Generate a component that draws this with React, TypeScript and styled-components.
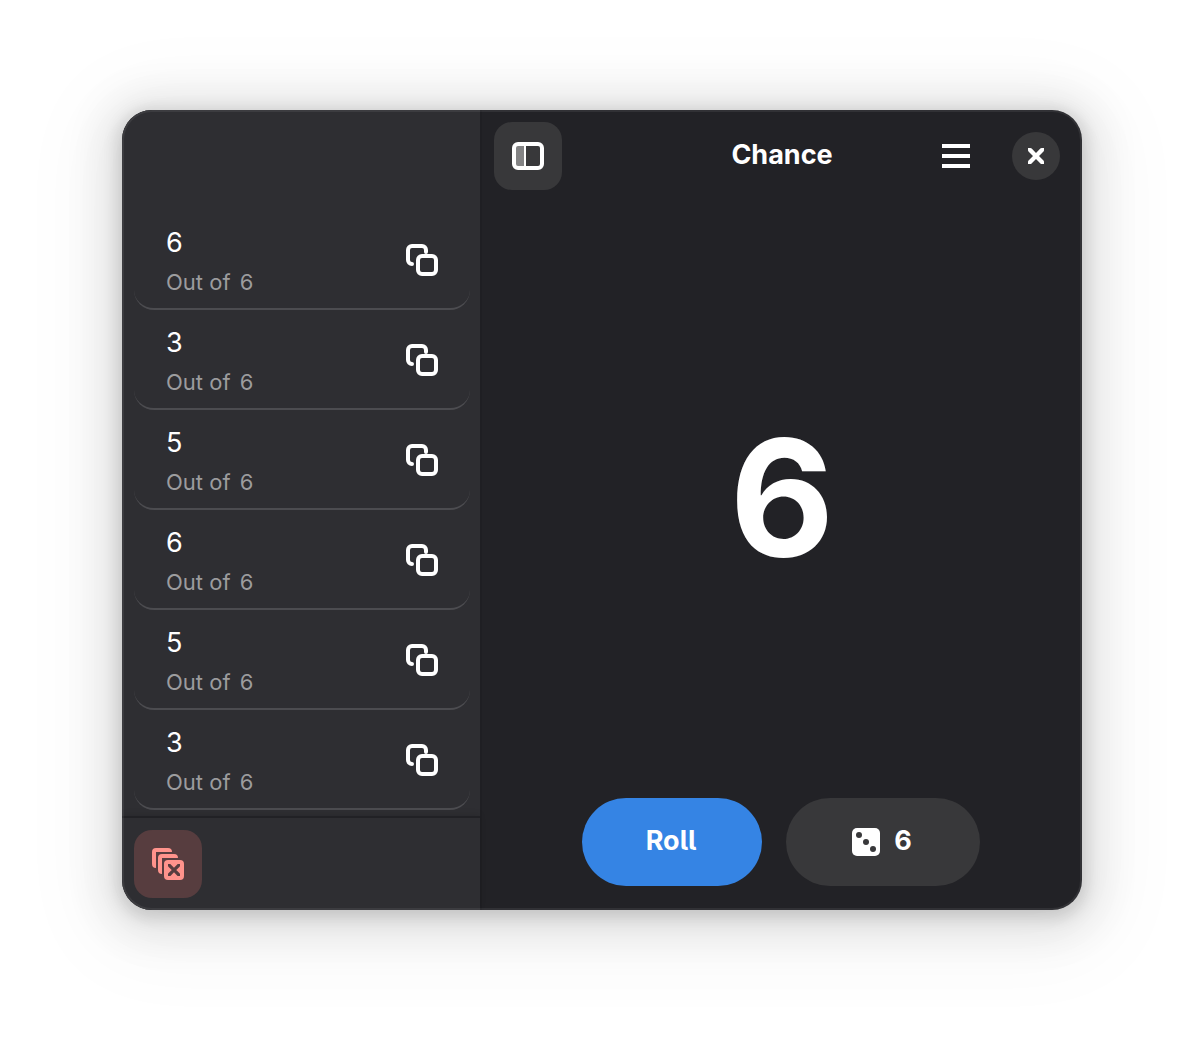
import React from "react";
import styled, { createGlobalStyle } from "styled-components";

const GlobalStyle = createGlobalStyle`
  *, *::before, *::after { box-sizing: border-box; }
  body {
    margin: 0;
    background: #ffffff;
    color: #ffffff;
    font-family: Inter, "Liberation Sans", sans-serif;
    font-size: 27px;
    line-height: 36px;
  }
  h1, p, ul { margin: 0; padding: 0; }
  button { border: 0; padding: 0; color: inherit; font: inherit; cursor: pointer; }
  svg { display: block; }
`;

const Desktop = styled.div`
  display: flex;
  min-height: 100vh;
  padding: 110px 122px 134px;
`;

const Window = styled.div`
  position: relative;
  display: flex;
  flex: 1;
  overflow: hidden;
  border-radius: 30px;
  background: #222226;
  box-shadow:
    0 4px 16px 4px rgba(0, 0, 0, 0.13),
    0 6px 40px 20px rgba(0, 0, 0, 0.09),
    0 12px 80px 40px rgba(0, 0, 0, 0.03);

  &::after {
    content: "";
    position: absolute;
    inset: 0;
    border: 2px solid rgba(255, 255, 255, 0.07);
    border-radius: inherit;
    pointer-events: none;
  }
`;

const Sidebar = styled.aside`
  display: flex;
  flex-direction: column;
  width: 360px;
  border-right: 2px solid #1f1f23;
  background: #2e2e32;
`;

const History = styled.ul`
  flex: 1;
  padding: 100px 10px 6px 12px;
  list-style: none;
`;

const Entry = styled.li`
  display: flex;
  align-items: center;
  justify-content: space-between;
  height: 100px;
  padding: 2px 32px 0;
  border-bottom: 2px solid #4c4c50;
  border-radius: 0 0 20px 20px;
`;

const EntryText = styled.div`
  padding-top: 2px;
`;

const Value = styled.p`
  line-height: 42px;
`;

const Caption = styled.p`
  color: #9c9c9e;
  font-size: 22px;
  line-height: 36px;
`;

const Sides = styled.span`
  margin-left: 3px;
`;

const SidebarFooter = styled.footer`
  padding: 12px;
  border-top: 2px solid #212125;
  box-shadow: 0 -2px 6px rgba(0, 0, 0, 0.1);
`;

const PlainButton = styled.button`
  background: transparent;
`;

const SquareButton = styled.button<{ $danger?: boolean }>`
  display: grid;
  place-items: center;
  width: 68px;
  height: 68px;
  border-radius: 18px;
  background: ${(p) => (p.$danger ? "#573d3f" : "#38383a")};
  color: ${(p) => (p.$danger ? "#ff938c" : "#ffffff")};
`;

const MenuButton = styled(SquareButton)`
  background: transparent;
`;

const CloseButton = styled.button`
  display: grid;
  place-items: center;
  width: 48px;
  height: 48px;
  border-radius: 50%;
  background: #38383a;
`;

const Content = styled.main`
  display: flex;
  flex: 1;
  flex-direction: column;
`;

const Header = styled.header`
  display: grid;
  grid-template-columns: 1fr auto 1fr;
  align-items: center;
  padding: 12px;
`;

const Title = styled.h1`
  padding-bottom: 2px;
  font-size: 27px;
  font-weight: 700;
`;

const HeaderEnd = styled.div`
  display: flex;
  align-items: center;
  justify-content: flex-end;
  gap: 22px;
  padding-right: 10px;
`;

const Result = styled.output`
  display: grid;
  flex: 1;
  place-items: center;
  padding-bottom: 4px;
  font-size: 161px;
  font-weight: 700;
  line-height: 200px;
`;

const Actions = styled.div`
  display: flex;
  justify-content: center;
  gap: 24px;
  padding: 0 26px 24px 24px;
`;

const PillButton = styled.button<{ $primary?: boolean }>`
  display: flex;
  align-items: center;
  justify-content: center;
  width: ${(p) => (p.$primary ? 180 : 194)}px;
  height: 88px;
  padding: 0 2px 0 0;
  border-radius: 44px;
  background: ${(p) => (p.$primary ? "#3584e4" : "#38383a")};
  font-weight: 700;
  font-feature-settings: "cv05";
`;

const PillLabel = styled.span`
  padding-bottom: 2px;
`;

const DieSlot = styled.span`
  margin-right: 14px;
`;

const CopyIcon = () => (
  <svg width="32" height="32" viewBox="0 0 32 32" fill="none" stroke="currentColor" strokeWidth="4" strokeLinecap="round" aria-hidden="true">
    <path d="M20 8V6a4 4 0 0 0-4-4H6a4 4 0 0 0-4 4v10a4 4 0 0 0 4 4" />
    <rect x="12" y="12" width="18" height="18" rx="4" />
  </svg>
);

const SidebarIcon = () => (
  <svg width="32" height="32" viewBox="0 0 32 32" aria-hidden="true">
    <path d="M4 6h8v20H4z" fill="#838384" />
    <path d="M12 5h2v22h-2z" fill="currentColor" />
    <rect x="2" y="4" width="28" height="24" rx="4" fill="none" stroke="currentColor" strokeWidth="4" />
  </svg>
);

const MenuIcon = () => (
  <svg width="28" height="24" viewBox="0 0 28 24" fill="currentColor" aria-hidden="true">
    <path d="M0 0h28v4H0zM0 10h28v4H0zM0 20h28v4H0z" />
  </svg>
);

const CloseIcon = () => (
  <svg width="16" height="16" viewBox="0 0 16 16" fill="currentColor" aria-hidden="true">
    <path d="M0 0h2.3c.6 0 1 .2 1.4.6L8 5.100l4.300-4.500c.4-.4.800-.6 1.400-.6H16v2c0 .6 0 1-.5 1.500L11 8l4.500 4.400c.4.400.5.900.5 1.500V16h-2.200c-.6 0-1-.1-1.400-.5L8 11.100l-4.400 4.400c-.4.400-.8.5-1.400.5H0v-2.100c0-.6.100-1.100.5-1.500L5 8 .5 3.500C.1 3 0 2.600 0 2z" />
  </svg>
);

const DieIcon = () => (
  <svg width="28" height="28" viewBox="0 0 28 28" aria-hidden="true">
    <rect width="28" height="28" rx="5" fill="currentColor" />
    <g fill="#38383a">
      <circle cx="7" cy="7" r="3" />
      <circle cx="14" cy="14" r="3" />
      <circle cx="21" cy="21" r="3" />
    </g>
  </svg>
);

const ClearIcon = () => (
  <svg width="32" height="32" viewBox="0 0 32 32" fill="currentColor" aria-hidden="true">
    <path d="M4 0h12a4 4 0 0 1 4 4H4v16a4 4 0 0 1-4-4V4a4 4 0 0 1 4-4z" />
    <path d="M10 6h12a4 4 0 0 1 4 4H10v16a4 4 0 0 1-4-4V10a4 4 0 0 1 4-4z" />
    <rect x="12" y="12" width="20" height="20" rx="4" />
    <path
      transform="translate(16 16) scale(0.75)"
      fill="#573d3f"
      d="M0 0h2.300c.6 0 1 .2 1.400.6L8 5l4.300-4.400c.4-.4.800-.6 1.400-.6H16v2c0 .6 0 1-.5 1.500L11 8l4.500 4.400c.4.400.5.900.5 1.500V16h-2.200c-.6 0-1-.1-1.400-.5L8 11.100l-4.400 4.400c-.4.400-.8.500-1.400.500H0v-2.100c0-.6.100-1.100.5-1.500L5 8 .5 3.500C.1 3 0 2.600 0 2z"
    />
  </svg>
);

const rolls = [6, 3, 5, 6, 5, 3];
const sides = 6;

export default function App() {
  return (
    <>
      <GlobalStyle />
      <Desktop>
        <Window>
          <Sidebar aria-label="Roll history">
            <History>
              {rolls.map((roll, i) => (
                <Entry key={i}>
                  <EntryText>
                    <Value>{roll}</Value>
                    <Caption>
                      Out of <Sides>{sides}</Sides>
                    </Caption>
                  </EntryText>
                  <PlainButton aria-label={`Copy ${roll}`}>
                    <CopyIcon />
                  </PlainButton>
                </Entry>
              ))}
            </History>
            <SidebarFooter>
              <SquareButton $danger aria-label="Clear history">
                <ClearIcon />
              </SquareButton>
            </SidebarFooter>
          </Sidebar>
          <Content>
            <Header>
              <SquareButton aria-label="Toggle sidebar">
                <SidebarIcon />
              </SquareButton>
              <Title>Chance</Title>
              <HeaderEnd>
                <MenuButton aria-label="Main menu">
                  <MenuIcon />
                </MenuButton>
                <CloseButton aria-label="Close">
                  <CloseIcon />
                </CloseButton>
              </HeaderEnd>
            </Header>
            <Result>{rolls[0]}</Result>
            <Actions>
              <PillButton $primary>
                <PillLabel>Roll</PillLabel>
              </PillButton>
              <PillButton aria-label={`Number of sides: ${sides}`}>
                <DieSlot>
                  <DieIcon />
                </DieSlot>
                <PillLabel>{sides}</PillLabel>
              </PillButton>
            </Actions>
          </Content>
        </Window>
      </Desktop>
    </>
  );
}
